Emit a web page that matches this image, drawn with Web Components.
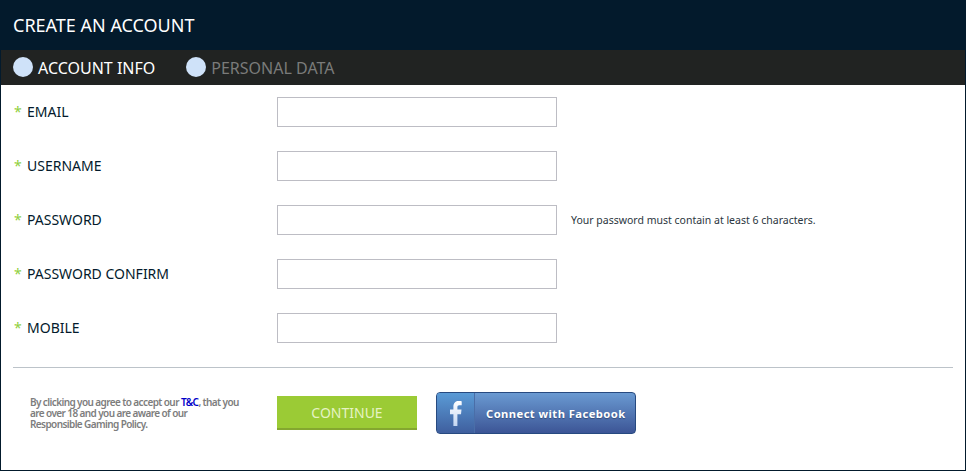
<!DOCTYPE html>
<html>
<head>
<meta charset="utf-8">
<title>Create an account</title>
<style>
    html, body {
        margin: 0;
        padding: 0;
        background: #fff;
    }
    body {
        font-family: "Noto Sans", "Open Sans", sans-serif;
    }
</style>
</head>
<body>
<signup-panel>
    <step-tab slot="tabs" active>ACCOUNT INFO</step-tab>
    <step-tab slot="tabs">PERSONAL DATA</step-tab>

    <form-row>EMAIL</form-row>
    <form-row>USERNAME</form-row>
    <form-row hint="Your password must contain at least 6 characters.">PASSWORD</form-row>
    <form-row>PASSWORD CONFIRM</form-row>
    <form-row>MOBILE</form-row>

    <span slot="terms">By clicking you agree to accept our <a href="#" style="color:#0000c8;text-decoration:none">T&amp;C</a>, that you<br>are over 18 and you are aware of our<br>Responsible Gaming Policy.</span>
    <continue-button slot="actions">CONTINUE</continue-button>
    <facebook-button slot="actions">Connect with Facebook</facebook-button>
</signup-panel>

<script>
class SignupPanel extends HTMLElement {
    constructor() {
        super();
        this.attachShadow({ mode: 'open' });
        this.shadowRoot.innerHTML = `
            <style>
                :host {
                    display: block;
                    box-sizing: border-box;
                    width: 966px;
                    height: 471px;
                    border: solid #031a2c;
                    border-width: 0 1px 1px 1px;
                    background: #fff;
                }
                header {
                    height: 50px;
                    margin: 0 -1px;
                    padding-left: 13px;
                    background: #031a2c;
                    color: #fff;
                    font-size: 18px;
                    line-height: 51px;
                }
                nav {
                    display: flex;
                    box-sizing: border-box;
                    align-items: center;
                    gap: 31px;
                    height: 35px;
                    padding: 0 0 1px 12px;
                    background: #212322;
                }
                .rows {
                    display: flex;
                    flex-direction: column;
                    gap: 24px;
                    padding: 12px 0 0 13px;
                }
                hr {
                    height: 1px;
                    margin: 24px 12px 0 12px;
                    border: 0;
                    background: #bcc3c9;
                }
                footer {
                    display: flex;
                    align-items: flex-start;
                }
                .terms {
                    box-sizing: border-box;
                    width: 276px;
                    padding: 29px 20px 0 29px;
                    color: #7d7d7d;
                    font-size: 10px;
                    font-weight: 600;
                    letter-spacing: -0.6px;
                    line-height: 11px;
                }
                .actions {
                    display: flex;
                    align-items: center;
                    gap: 19px;
                    padding-top: 24px;
                }
            </style>
            <header>CREATE AN ACCOUNT</header>
            <nav><slot name="tabs"></slot></nav>
            <div class="rows"><slot></slot></div>
            <hr>
            <footer>
                <div class="terms"><slot name="terms"></slot></div>
                <div class="actions"><slot name="actions"></slot></div>
            </footer>
        `;
    }
}

class StepTab extends HTMLElement {
    constructor() {
        super();
        this.attachShadow({ mode: 'open' });
        this.shadowRoot.innerHTML = `
            <style>
                :host {
                    display: flex;
                    align-items: center;
                    gap: 5px;
                    color: #7a7b7a;
                    font-size: 16px;
                    line-height: 34px;
                }
                :host([active]) {
                    color: #fff;
                }
                i {
                    width: 20px;
                    height: 20px;
                    border-radius: 50%;
                    background: #cfe2f9;
                }
                span {
                    padding-top: 2px;
                }
            </style>
            <i></i><span><slot></slot></span>
        `;
    }
}

class FormRow extends HTMLElement {
    constructor() {
        super();
        this.attachShadow({ mode: 'open' });
        this.shadowRoot.innerHTML = `
            <style>
                :host {
                    display: flex;
                    align-items: center;
                    height: 30px;
                    color: #031a2c;
                    font-size: 14px;
                }
                b {
                    width: 13px;
                    padding-bottom: 2px;
                    color: #8fcf3c;
                    font-weight: 400;
                    font-size: 14px;
                }
                label {
                    width: 250px;
                    padding-bottom: 2px;
                }
                input {
                    box-sizing: border-box;
                    width: 280px;
                    height: 30px;
                    margin: 0;
                    border: 1px solid #bdbdc4;
                    background: #fff;
                }
                span {
                    margin-left: 14px;
                    color: #2b3640;
                    font-size: 10.5px;
                }
            </style>
            <b>*</b>
            <label><slot></slot></label>
            <input type="text">
            <span></span>
        `;
        this.shadowRoot.querySelector('span').textContent = this.getAttribute('hint') || '';
    }
}

class ContinueButton extends HTMLElement {
    constructor() {
        super();
        this.attachShadow({ mode: 'open' });
        this.shadowRoot.innerHTML = `
            <style>
                :host {
                    display: block;
                    box-sizing: border-box;
                    width: 140px;
                    height: 34px;
                    border-bottom: 2px solid #84a72f;
                    background: #9bcb35;
                    color: #e6f3c4;
                    font-size: 14px;
                    line-height: 33px;
                    text-align: center;
                }
            </style>
            <slot></slot>
        `;
    }
}

class FacebookButton extends HTMLElement {
    constructor() {
        super();
        this.attachShadow({ mode: 'open' });
        this.shadowRoot.innerHTML = `
            <style>
                :host {
                    display: flex;
                    box-sizing: border-box;
                    width: 200px;
                    height: 42px;
                    border: 1px solid #274a80;
                    border-radius: 4px;
                    background: linear-gradient(#6a9ad2, #3c5596);
                    color: #fff;
                    font-size: 11.2px;
                    font-weight: 700;
                    letter-spacing: 0.45px;
                    line-height: 41px;
                    overflow: hidden;
                }
                .icon {
                    display: flex;
                    align-items: center;
                    justify-content: center;
                    box-sizing: border-box;
                    width: 38px;
                    padding: 1px 0 0 1px;
                    border-right: 1px solid #4a6ea8;
                    background: linear-gradient(#5a9bd6, #3f5f9e);
                }
                svg {
                    display: block;
                }
                .text {
                    padding-left: 11px;
                    text-shadow: 0 1px 1px rgba(0, 0, 0, 0.3);
                }
            </style>
            <span class="icon">
                <svg width="12" height="25" viewBox="0 0 12 25">
                    <defs>
                        <linearGradient id="fb" x1="0" y1="0" x2="0" y2="1">
                            <stop offset="0" stop-color="#ffffff"></stop>
                            <stop offset="1" stop-color="#c4d6f2"></stop>
                        </linearGradient>
                    </defs>
                    <path fill="url(#fb)" d="M3.4 25V13.2H0V8.6h3.4V5.6C3.4 2 5.6 0 8.7 0c1.4 0 2.6.1 3 .2v4H9.4c-1.7 0-2 .8-2 2v2.4h4.1l-.5 4.6H7.4V25z"></path>
                </svg>
            </span>
            <span class="text"><slot></slot></span>
        `;
    }
}

customElements.define('signup-panel', SignupPanel);
customElements.define('step-tab', StepTab);
customElements.define('form-row', FormRow);
customElements.define('continue-button', ContinueButton);
customElements.define('facebook-button', FacebookButton);
</script>
</body>
</html>
